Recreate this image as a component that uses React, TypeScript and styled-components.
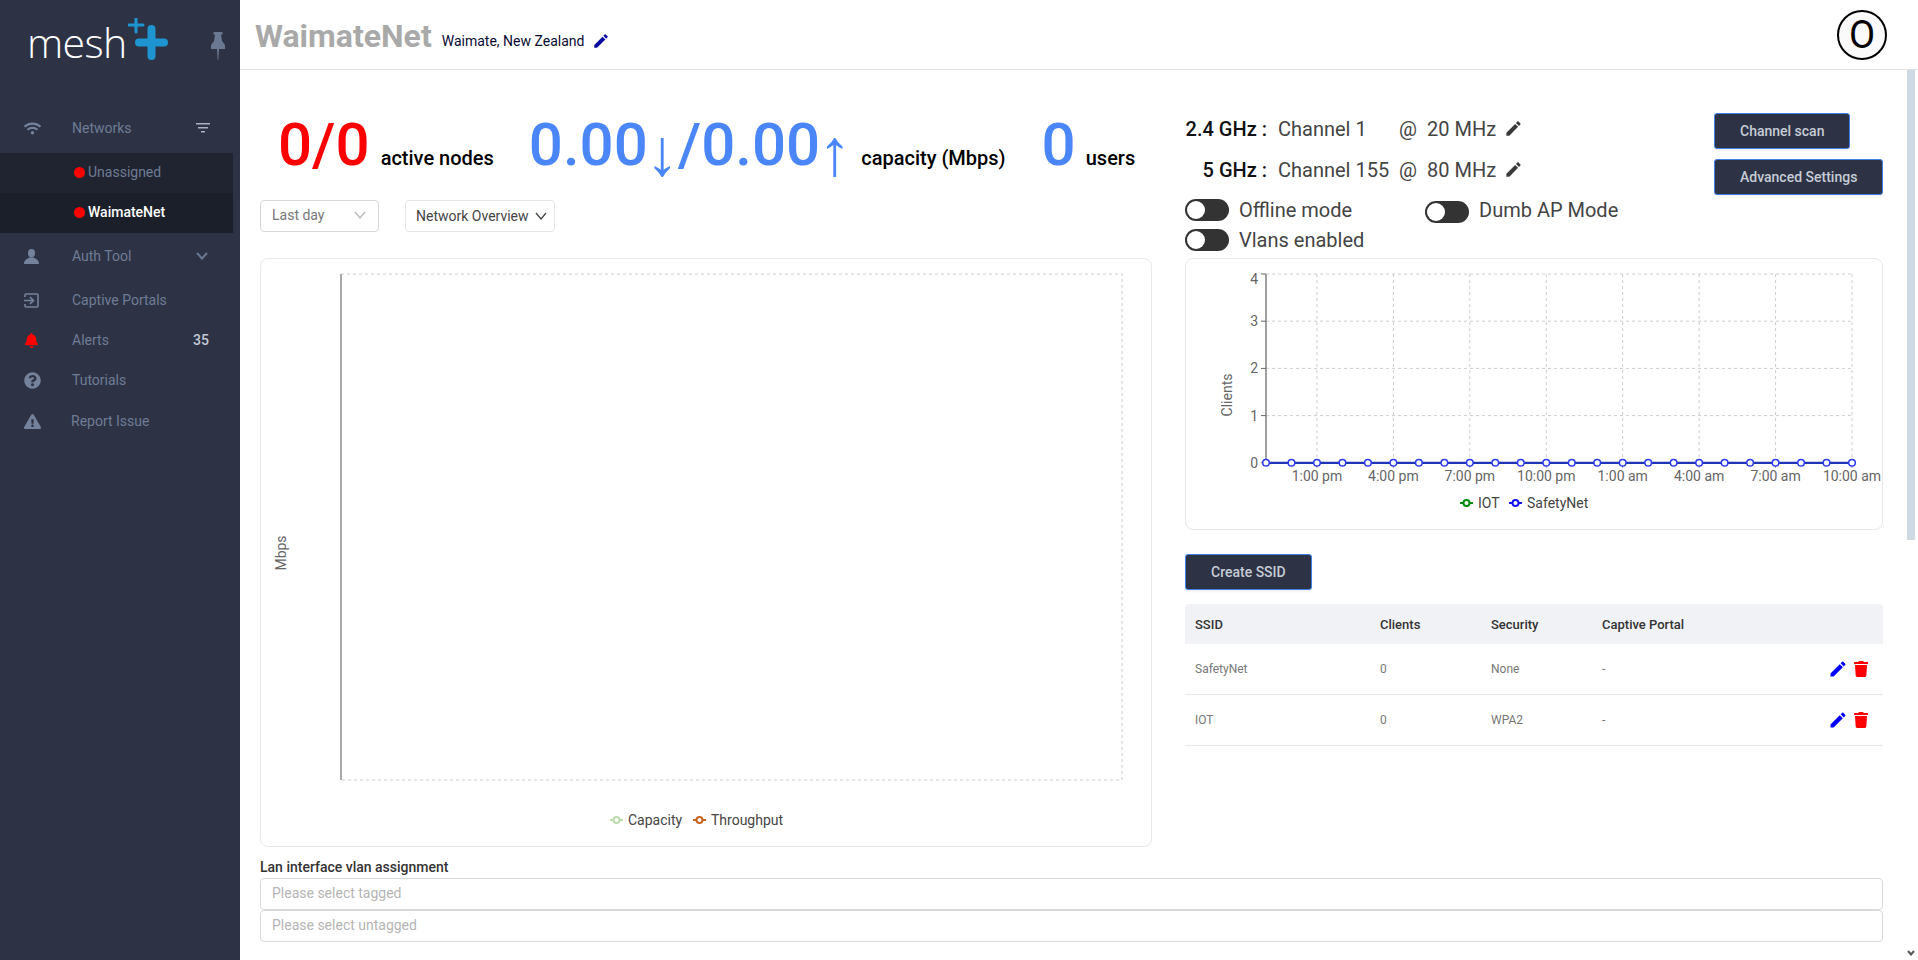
import React from 'react';
import styled, { createGlobalStyle } from 'styled-components';
import { FaWifi, FaBell, FaQuestionCircle, FaExclamationTriangle, FaTrash } from 'react-icons/fa';
import { MdEdit } from 'react-icons/md';

const Global = createGlobalStyle`
  html, body { margin: 0; padding: 0; height: 100%; overflow: hidden; background: #fff; }
  body { font-family: Roboto, "Liberation Sans", sans-serif; }
  * { box-sizing: border-box; }
`;

const Page = styled.div`display: flex; width: 1918px; height: 960px; overflow: hidden; position: relative;`;
const Sidebar = styled.aside`width: 240px; flex: none; background: #2d3345; color: #6f7c95; font-size: 14px;`;
const Brand = styled.div`height: 108px; display: flex; align-items: flex-start; padding: 12px 15px 0 27px;`;
const LogoText = styled.span`font-family: "Open Sans", sans-serif; font-weight: 300; font-size: 41px; line-height: 60px; color: #fff; letter-spacing: -0.6px;`;
const LogoMark = styled.svg`margin: 6px 0 0 1px; width: 41px; height: 43px; flex: none;`;
const PinIcon = styled.svg`margin: 20px 0 0 auto; width: 14px; height: 28px; flex: none; fill: #6b7891;`;
const NavRow = styled.div<{ $mt?: number }>`
  height: 40px; display: flex; align-items: center; padding: 0 31px 0 24px; margin-top: ${p => p.$mt ?? 0}px;
`;
const NavIcon = styled.span<{ $color?: string; $w?: number }>`width: ${p => p.$w ?? 48}px; flex: none; display: flex; align-items: center; color: ${p => p.$color ?? '#75829b'};`;
const NavLabel = styled.span`flex: 1;`;
const Badge = styled.span`color: #c3c9d4; font-weight: 500;`;
const FilterIcon = styled.svg`width: 14px; height: 10px; margin-right: -1px; fill: #a9b1c0;`;
const NavChevron = styled.svg`width: 12px; height: 8px; margin-right: 1px; fill: none; stroke: #6b7891; stroke-width: 2;`;
const SubList = styled.div`width: 233px; margin-top: 5px;`;
const SubItem = styled.div<{ $active?: boolean }>`
  height: 40px; display: flex; align-items: center; padding: 0 0 2px 74px; gap: 3px;
  background: ${p => (p.$active ? '#1b1f29' : '#1f2430')};
  color: ${p => (p.$active ? '#fff' : '#6f7c95')};
  font-weight: ${p => (p.$active ? 500 : 400)};
`;
const Dot = styled.i`width: 11px; height: 11px; border-radius: 50%; background: #f00; flex: none;`;

const Main = styled.main`flex: 1; min-width: 0; display: flex; flex-direction: column;`;
const TopBar = styled.header`height: 70px; flex: none; border-bottom: 1px solid #e2e2e2; display: flex; align-items: center; padding: 0 31px 0 15px;`;
const Title = styled.h1`margin: 0; font-size: 32px; font-weight: 700; color: #a9a9a9; line-height: 1; position: relative; top: 1px;`;
const Place = styled.span`margin-left: 10px; font-size: 14px; color: #0b0b33; position: relative; top: 6px;`;
const PlaceEdit = styled.span`margin-left: 8px; color: #0c0ca0; display: flex; position: relative; top: 6px;`;
const Avatar = styled.div`
  margin-left: auto; width: 50px; height: 50px; border-radius: 50%; border: 2px solid #000; background: #fafafa;
  display: flex; align-items: center; justify-content: center; font-size: 38px; color: #000; line-height: 1;
`;
const Content = styled.div`display: grid; grid-template-columns: 892px 698px; column-gap: 33px; padding: 0 35px 0 20px;`;
const Column = styled.section`min-width: 0;`;
const Stats = styled.div`height: 130px; display: flex; align-items: baseline; padding: 37px 0 0 18px; white-space: nowrap;`;
const BigNumber = styled.span<{ $color: string; $ml?: number }>`
  font-size: 60px; font-weight: 500; line-height: 76px; color: ${p => p.$color}; margin-left: ${p => p.$ml ?? 0}px;
`;
const Arrow = styled.span`font-family: "Liberation Sans", sans-serif; font-weight: 400; font-size: 66px; line-height: 1; vertical-align: -10px; margin: 0 -1px 0 -2px;`;
const StatLabel = styled.span<{ $ml: number }>`font-size: 20px; font-weight: 500; color: #000; margin-left: ${p => p.$ml}px;`;
const SelectRow = styled.div`display: flex; gap: 26px; height: 58px;`;
const SelectBox = styled.div<{ $w: number; $muted?: boolean }>`
  width: ${p => p.$w}px; height: 32px; border-radius: 4px; border: 1px solid ${p => (p.$muted ? '#d6d6d6' : '#e6e6e6')};
  display: flex; align-items: center; justify-content: space-between;
  padding: 0 ${p => (p.$muted ? 12 : 7)}px ${p => (p.$muted ? 2 : 0)}px ${p => (p.$muted ? 11 : 10)}px;
  font-size: 14px; color: ${p => (p.$muted ? '#777' : '#444')};
`;
const Chevron = styled.svg<{ $color: string }>`width: 12px; height: 8px; fill: none; stroke: ${p => p.$color}; stroke-width: 1.3;`;
const ChartCard = styled.div<{ $h: number }>`height: ${p => p.$h}px; border: 1px solid #e8e8e8; border-radius: 8px; overflow: hidden;`;
const ChartSvg = styled.svg`display: block; text { font-family: Roboto, sans-serif; font-size: 14px; }`;
const RightTop = styled.div`height: 188px; display: flex; justify-content: space-between;`;
const RadioBlock = styled.div`padding-top: 38px; color: #444;`;
const FreqGrid = styled.div`display: grid; grid-template-columns: 82px 132px 28px 77px auto; grid-auto-rows: 41px; align-items: center; font-size: 20px;`;
const FreqName = styled.span`text-align: right; font-weight: 500; color: #111; white-space: nowrap;`;
const FreqText = styled.span<{ $pad?: number }>`padding-left: ${p => p.$pad ?? 0}px; white-space: nowrap;`;
const FreqEdit = styled.span`display: flex; color: #3a3a3a;`;
const ToggleGrid = styled.div`display: grid; grid-template-columns: 240px auto; margin-top: 9px; row-gap: 8px;`;
const ToggleItem = styled.label`display: flex; align-items: center; gap: 10px; font-size: 20px; color: #444; height: 22px;`;
const Toggle = styled.span<{ $drop?: number }>`
  width: 44px; height: 22px; border-radius: 11px; background: #333; position: relative; top: ${p => p.$drop ?? 0}px; flex: none;
  &::after { content: ''; position: absolute; left: 2px; top: 2px; width: 18px; height: 18px; border-radius: 50%; background: #fff; }
`;
const ButtonCol = styled.div`padding-top: 43px; width: 169px; display: flex; flex-direction: column; align-items: flex-start; gap: 10px;`;
const Button = styled.button<{ $w: number }>`
  width: ${p => p.$w}px; height: 36px; background: #2d3345; border: 1px solid #3f7fe8; border-radius: 3px; padding: 0 0 0 25px;
  text-align: left; font: 500 14px Roboto, sans-serif; color: #c6ccd6; box-shadow: 0 2px 2px rgba(0,0,0,.05);
`;
const SsidBlock = styled.div`margin-top: 24px;`;
const SsidTable = styled.div`margin-top: 14px;`;
const TableRow = styled.div<{ $head?: boolean }>`
  display: grid; grid-template-columns: 185px 111px 111px 1fr auto; align-items: center;
  height: ${p => (p.$head ? 40 : 51)}px; padding: 0 14px 0 10px;
  background: ${p => (p.$head ? '#f1f2f6' : '#fff')};
  border-radius: ${p => (p.$head ? '4px 4px 0 0' : 0)};
  border-bottom: ${p => (p.$head ? 'none' : '1px solid #e8e9ed')};
  font-size: ${p => (p.$head ? 13 : 12)}px; font-weight: ${p => (p.$head ? 500 : 400)};
  color: ${p => (p.$head ? '#333' : '#777')};
`;
const RowActions = styled.span`display: flex; align-items: center; gap: 5px;`;
const LanSection = styled.div`grid-column: 1 / -1; margin-top: 12px;`;
const LanLabel = styled.div`font-size: 14px; font-weight: 500; color: #333; line-height: 16px;`;
const FakeInput = styled.div`height: 32px; border: 1px solid #d9d9d9; border-radius: 4px; display: flex; align-items: center; padding: 0 0 2px 11px; font-size: 14px; color: #b5b5b5;`;
const LanInputs = styled.div`margin-top: 3px;`;
const ScrollThumb = styled.div`position: absolute; left: 1907px; top: 70px; width: 8px; height: 470px; background: #cfd9e3;`;
const ScrollArrow = styled.svg`position: absolute; left: 1907px; top: 950px; width: 8px; height: 6px; fill: none; stroke: #555; stroke-width: 2;`;

const Pencil = ({ size = 16 }: { size?: number }) => <MdEdit size={size} />;
const Caret = ({ color }: { color: string }) => (
  <Chevron $color={color} viewBox="0 0 12 8"><polyline points="1,1 6,7 11,1" /></Chevron>
);

const Legend = ({ x, y, color, label }: { x: number; y: number; color: string; label: string }) => (
  <g>
    <line x1={x} x2={x + 13} y1={y} y2={y} stroke={color} strokeWidth={2} />
    <circle cx={x + 6.5} cy={y} r={3} fill="#fff" stroke={color} strokeWidth={2} />
    <text x={x + 18} y={y + 5} fill="#444">{label}</text>
  </g>
);

const TrafficChart = () => (
  <ChartSvg width={890} height={587} viewBox="1 1 890 587">
    <rect x={81} y={16} width={781} height={506} fill="none" stroke="#ddd" strokeWidth={1.5} strokeDasharray="3 3" />
    <line x1={81} x2={81} y1={16} y2={522} stroke="#a8a8a8" strokeWidth={2} />
    <text transform="translate(26 295) rotate(-90)" textAnchor="middle" fill="#666">Mbps</text>
    <Legend x={350} y={562} color="#bcdcae" label="Capacity" />
    <Legend x={433} y={562} color="#c8641e" label="Throughput" />
  </ChartSvg>
);

const clientX = (i: number) => 81 + (i * 586) / 23;
const clientY = (v: number) => 16 + (4 - v) * 47.2;
const times = ['1:00 pm', '4:00 pm', '7:00 pm', '10:00 pm', '1:00 am', '4:00 am', '7:00 am', '10:00 am'];

const ClientsChart = () => (
  <ChartSvg width={696} height={270} viewBox="1 1 696 270">
    {[1, 2, 3, 4].map(v => (
      <line key={v} x1={81} x2={667} y1={clientY(v)} y2={clientY(v)} stroke="#ccc" strokeDasharray="3 3" />
    ))}
    {times.map((t, i) => (
      <g key={t}>
        <line x1={clientX(2 + i * 3)} x2={clientX(2 + i * 3)} y1={16} y2={clientY(0)} stroke="#ccc" strokeDasharray="3 3" />
        <line x1={clientX(2 + i * 3)} x2={clientX(2 + i * 3)} y1={clientY(0)} y2={clientY(0) + 5} stroke="#888" />
        <text x={clientX(2 + i * 3)} y={clientY(0) + 18} textAnchor="middle" fill="#666">{t}</text>
      </g>
    ))}
    <line x1={81} x2={81} y1={16} y2={clientY(0)} stroke="#a0a0a0" strokeWidth={2} />
    {[0, 1, 2, 3, 4].map(v => (
      <g key={v}>
        <line x1={76} x2={81} y1={clientY(v)} y2={clientY(v)} stroke="#666" />
        <text x={73} y={clientY(v) + (v === 4 ? 10 : 5)} textAnchor="end" fill="#666">{v}</text>
      </g>
    ))}
    <line x1={81} x2={667} y1={clientY(0)} y2={clientY(0)} stroke="#2035b5" strokeWidth={2.2} />
    {Array.from({ length: 24 }, (_, i) => (
      <circle key={i} cx={clientX(i)} cy={clientY(0)} r={3.3} fill="#fff" stroke="#2a3bf0" strokeWidth={1.5} />
    ))}
    <text transform="translate(47 137) rotate(-90)" textAnchor="middle" fill="#666">Clients</text>
    <Legend x={275} y={245} color="#0a8a0a" label="IOT" />
    <Legend x={324} y={245} color="#1414f0" label="SafetyNet" />
  </ChartSvg>
);

export default function App() {
  return (
    <Page>
      <Global />
      <Sidebar>
        <Brand>
          <LogoText>mesh</LogoText>
          <LogoMark viewBox="0 0 41 43">
            <path d="M8 0v14M1 7h14" stroke="#1e95d0" strokeWidth="3" strokeLinecap="round" fill="none" />
            <path d="M23.5 11v27M11 24.5h25" stroke="#1e95d0" strokeWidth="8" strokeLinecap="round" fill="none" />
          </LogoMark>
          <PinIcon viewBox="0 0 14 28">
            <path d="M2.5 0H11.5V2.5H10L11 9L14 13V17H8L7.3 28H6.7L6 17H0V13L3 9L4 2.5H2.5Z" />
          </PinIcon>
        </Brand>
        <NavRow>
          <NavIcon><FaWifi size={17} /></NavIcon>
          <NavLabel>Networks</NavLabel>
          <FilterIcon viewBox="0 0 14 10"><rect width="14" height="1.5" /><rect x="2" y="4" width="10" height="1.5" /><rect x="5" y="8" width="4" height="1.5" /></FilterIcon>
        </NavRow>
        <SubList>
          <SubItem><Dot />Unassigned</SubItem>
          <SubItem $active><Dot />WaimateNet</SubItem>
        </SubList>
        <NavRow $mt={3}>
          <NavIcon>
            <svg width="15" height="15" viewBox="0 0 15 15" fill="#75829b"><ellipse cx="7.5" cy="4.2" rx="3.5" ry="4.2" /><path d="M0 15C0 11 3 10 5.5 8.5h4C12 10 15 11 15 15Z" /></svg>
          </NavIcon>
          <NavLabel>Auth Tool</NavLabel>
          <NavChevron viewBox="0 0 12 8"><polyline points="1,1 6,6.5 11,1" /></NavChevron>
        </NavRow>
        <NavRow $mt={4}>
          <NavIcon>
            <svg width="15" height="15" viewBox="0 0 15 15" fill="none" stroke="#75829b" strokeWidth="1.6"><path d="M1 4V2Q1 1 2 1H13Q14 1 14 2V13Q14 14 13 14H2Q1 14 1 13V11" /><path d="M0 7.5H9M6 4.2L9.5 7.5L6 10.8" /></svg>
          </NavIcon>
          <NavLabel>Captive Portals</NavLabel>
        </NavRow>
        <NavRow>
          <NavIcon $color="#f00"><FaBell size={15} /></NavIcon>
          <NavLabel>Alerts</NavLabel>
          <Badge>35</Badge>
        </NavRow>
        <NavRow>
          <NavIcon><FaQuestionCircle size={17} /></NavIcon>
          <NavLabel>Tutorials</NavLabel>
        </NavRow>
        <NavRow $mt={1}>
          <NavIcon $w={47}><FaExclamationTriangle size={17} /></NavIcon>
          <NavLabel>Report Issue</NavLabel>
        </NavRow>
      </Sidebar>
      <Main>
        <TopBar>
          <Title>WaimateNet</Title>
          <Place>Waimate, New Zealand</Place>
          <PlaceEdit><Pencil size={18} /></PlaceEdit>
          <Avatar>O</Avatar>
        </TopBar>
        <Content>
          <Column>
            <Stats>
              <BigNumber $color="#f00">0/0</BigNumber>
              <StatLabel $ml={11}>active nodes</StatLabel>
              <BigNumber $color="#4a86f7" $ml={35}>0.00<Arrow>↓</Arrow>/0.00<Arrow>↑</Arrow></BigNumber>
              <StatLabel $ml={11}>capacity (Mbps)</StatLabel>
              <BigNumber $color="#4a86f7" $ml={36}>0</BigNumber>
              <StatLabel $ml={10}>users</StatLabel>
            </Stats>
            <SelectRow>
              <SelectBox $w={119} $muted>Last day<Caret color="#bbb" /></SelectBox>
              <SelectBox $w={150}>Network Overview<Caret color="#444" /></SelectBox>
            </SelectRow>
            <ChartCard $h={589}><TrafficChart /></ChartCard>
          </Column>
          <Column>
            <RightTop>
              <RadioBlock>
                <FreqGrid>
                  <FreqName>2.4 GHz :</FreqName>
                  <FreqText $pad={11}>Channel 1</FreqText>
                  <FreqText>@</FreqText>
                  <FreqText>20 MHz</FreqText>
                  <FreqEdit><Pencil size={19} /></FreqEdit>
                  <FreqName>5 GHz :</FreqName>
                  <FreqText $pad={11}>Channel 155</FreqText>
                  <FreqText>@</FreqText>
                  <FreqText>80 MHz</FreqText>
                  <FreqEdit><Pencil size={19} /></FreqEdit>
                </FreqGrid>
                <ToggleGrid>
                  <ToggleItem><Toggle />Offline mode</ToggleItem>
                  <ToggleItem><Toggle $drop={2} />Dumb AP Mode</ToggleItem>
                  <ToggleItem><Toggle />Vlans enabled</ToggleItem>
                </ToggleGrid>
              </RadioBlock>
              <ButtonCol>
                <Button $w={136}>Channel scan</Button>
                <Button $w={169}>Advanced Settings</Button>
              </ButtonCol>
            </RightTop>
            <ChartCard $h={272}><ClientsChart /></ChartCard>
            <SsidBlock>
              <Button $w={127}>Create SSID</Button>
              <SsidTable>
                <TableRow $head><span>SSID</span><span>Clients</span><span>Security</span><span>Captive Portal</span><span /></TableRow>
                {[['SafetyNet', 'None'], ['IOT', 'WPA2']].map(([name, sec]) => (
                  <TableRow key={name}>
                    <span>{name}</span><span>0</span><span>{sec}</span><span>-</span>
                    <RowActions>
                      <MdEdit size={20} color="#0000ff" />
                      <FaTrash size={16} color="#ff0000" />
                    </RowActions>
                  </TableRow>
                ))}
              </SsidTable>
            </SsidBlock>
          </Column>
          <LanSection>
            <LanLabel>Lan interface vlan assignment</LanLabel>
            <LanInputs>
              <FakeInput>Please select tagged</FakeInput>
              <FakeInput>Please select untagged</FakeInput>
            </LanInputs>
          </LanSection>
        </Content>
      </Main>
      <ScrollThumb />
      <ScrollArrow viewBox="0 0 8 6"><polyline points="1,1 4,4.5 7,1" /></ScrollArrow>
    </Page>
  );
}
